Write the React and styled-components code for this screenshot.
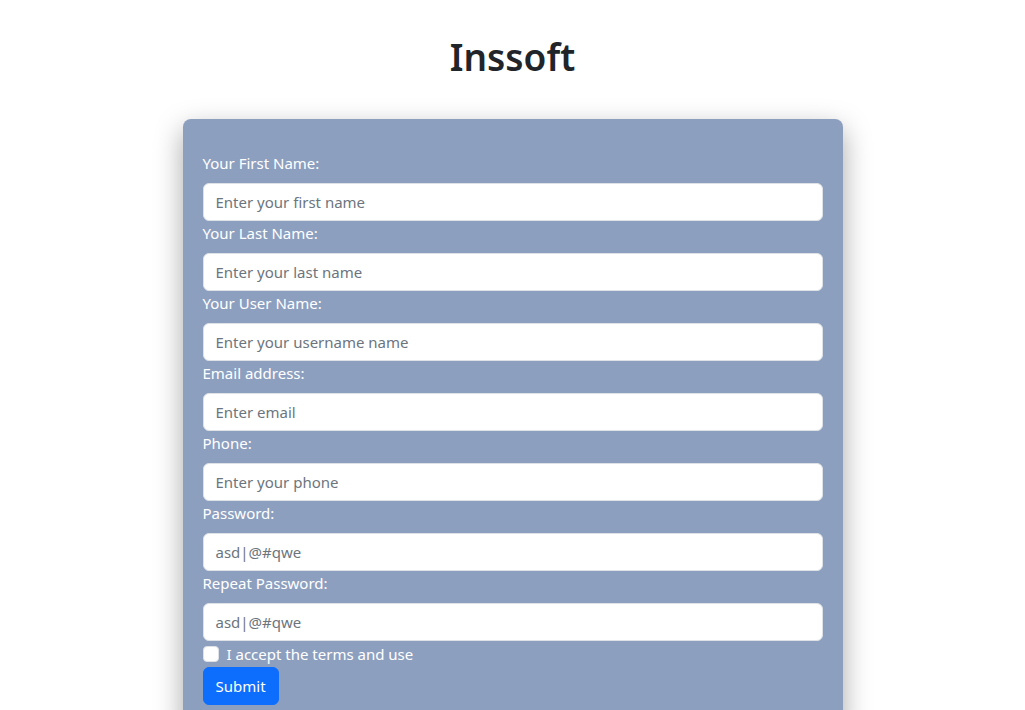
import React from "react";
import styled, { createGlobalStyle } from "styled-components";

const Global = createGlobalStyle`
  html, body { margin: 0; padding: 0; background: #fff; }
  body {
    font-family: "Noto Sans", "Open Sans", sans-serif;
    font-size: 16px;
    line-height: 1.5;
    color: #212529;
  }
  * { box-sizing: border-box; }
`;

const Page = styled.div`
  display: flex;
  flex-direction: column;
  align-items: center;
  padding-top: 33px;
`;

const Title = styled.h1`
  margin: 0 0 38px;
  font-size: 37px;
  line-height: 48px;
  font-weight: 600;
  color: #212529;
`;

const Card = styled.form`
  width: 660px;
  background: #8d9fbf;
  border-radius: 8px;
  padding: 32px 20px 24px;
  box-shadow: 0 10px 28px rgba(0, 0, 0, 0.35);
  display: flex;
  flex-direction: column;
`;

const Label = styled.label`
  display: block;
  color: #fff;
  font-size: 15px;
  line-height: 24px;
  margin-bottom: ${(p) => (p.$gap ? "8px" : "0")};
`;

const Input = styled.input`
  display: block;
  width: 100%;
  height: 38px;
  padding: 6px 12px;
  font-family: inherit;
  font-size: 15px;
  color: #212529;
  background: #fff;
  border: 1px solid #dee2e6;
  border-radius: 6px;
  outline: none;
  &::placeholder { color: #6c757d; opacity: 1; }
`;

const CheckRow = styled.div`
  display: flex;
  align-items: center;
  gap: 8px;
  height: 26px;
  color: #fff;
  font-size: 15px;
`;

const Box = styled.span`
  width: 16px;
  height: 16px;
  background: #fff;
  border: 1px solid #dee2e6;
  border-radius: 4px;
  flex: none;
`;

const Button = styled.button`
  align-self: flex-start;
  height: 38px;
  padding: 6px 12px;
  font-family: inherit;
  font-size: 15px;
  color: #fff;
  background: #0d6efd;
  border: 1px solid #0d6efd;
  border-radius: 6px;
`;

const fields = [
  ["Your First Name:", "Enter your first name"],
  ["Your Last Name:", "Enter your last name"],
  ["Your User Name:", "Enter your username name"],
  ["Email address:", "Enter email"],
  ["Phone:", "Enter your phone"],
  ["Password:", "asd|@#qwe"],
  ["Repeat Password:", "asd|@#qwe"],
];

export default function App() {
  return (
    <>
      <Global />
      <Page>
        <Title>Inssoft</Title>
        <Card onSubmit={(e) => e.preventDefault()}>
          {fields.map(([l, ph]) => (
            <div key={l}>
              <Label $gap>{l}</Label>
              <Input placeholder={ph} />
            </div>
          ))}
          <CheckRow>
            <Box />
            <span>I accept the terms and use</span>
          </CheckRow>
          <Button type="submit">Submit</Button>
        </Card>
      </Page>
    </>
  );
}
